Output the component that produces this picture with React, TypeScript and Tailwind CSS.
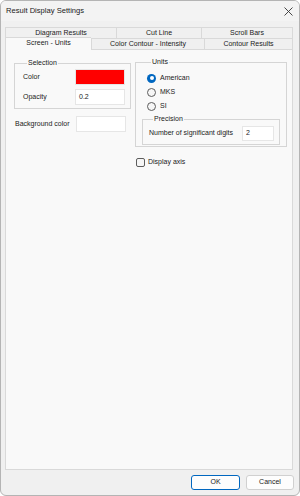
import React from "react";

var rowOne = [
  { label: "Diagram Results", w: "w-[111px]" },
  { label: "Cut Line", w: "w-[85px]" },
  { label: "Scroll Bars", w: "w-[92px]" },
];

var rowTwo = [
  { label: "Screen - Units", w: "w-[86px]", active: true },
  { label: "Color Contour - Intensity", w: "w-[113px]" },
  { label: "Contour Results", w: "w-[89px]" },
];

function Group(props: { title: string; className: string; children: React.ReactNode }) {
  return (
    <fieldset className={"border border-[#d5d5d5] " + props.className}>
      <legend className="ml-[4px] px-[1px] leading-[10px]">{props.title}</legend>
      {props.children}
    </fieldset>
  );
}

function Radio(props: { label: string; checked?: boolean }) {
  return (
    <div className="flex items-center h-[14px]">
      {props.checked ? (
        <span className="w-[9px] h-[9px] rounded-full bg-[#0067c0] flex items-center justify-center">
          <span className="w-[4px] h-[4px] rounded-full bg-white" />
        </span>
      ) : (
        <span className="w-[9px] h-[9px] rounded-full border border-[#5d5d5d] bg-[#f6f6f6]" />
      )}
      <span className="ml-[4px]">{props.label}</span>
    </div>
  );
}

export default function App() {
  return (
    <div
      className="w-[300px] h-[496px] bg-[#f0f0f0] border border-[#b4b4b4] rounded-[6px] overflow-hidden flex flex-col text-[7px] text-[#1a1a1a]"
      style={{ fontFamily: '"Liberation Sans", Arial, sans-serif' }}
    >
      {/* title bar */}
      <div className="h-[20px] shrink-0 flex items-center justify-between pl-[5px] pr-[5px] bg-[#f3f3f3]">
        <span className="text-[7.6px]">Result Display Settings</span>
        <svg width="9" height="9" viewBox="0 0 9 9" className="mr-[1px]">
          <path d="M0.5 0.5 L8.5 8.5 M8.5 0.5 L0.5 8.5" stroke="#333" strokeWidth="0.9" />
        </svg>
      </div>

      {/* tabs */}
      <div className="mt-[6px] ml-[4px] w-[288px] flex flex-col">
        <div className="flex h-[11px]">
          {rowOne.map(function (t, i) {
            return (
              <div
                key={i}
                className={
                  t.w +
                  " border-t border-l border-[#d9d9d9] flex items-center justify-center bg-[#f0f0f0]" +
                  (i === rowOne.length - 1 ? " border-r" : "")
                }
              >
                {t.label}
              </div>
            );
          })}
        </div>
        <div className="flex h-[12px] items-end">
          {rowTwo.map(function (t, i) {
            return (
              <div
                key={i}
                className={
                  t.w +
                  " flex items-center justify-center border-t border-l border-[#d9d9d9]" +
                  (t.active
                    ? " h-[14px] -mb-[1px] bg-[#f9f9f9] relative z-10 pb-[2px]"
                    : " h-[12px] bg-[#f0f0f0] border-b") +
                  (i === rowTwo.length - 1 ? " border-r" : "")
                }
              >
                {t.label}
              </div>
            );
          })}
        </div>

        {/* panel */}
        <div className="h-[420px] bg-[#f9f9f9] border border-t-0 border-[#d9d9d9] flex items-start pl-[8px] pt-[8px]">
          {/* left column */}
          <div className="w-[117px] flex flex-col">
            <Group title="Selection" className="w-[117px] h-[51px] pl-[8px] pr-[5px]">
              <div className="flex items-center justify-between h-[16px] mt-[1px]">
                <span>Color</span>
                <span className="w-[50px] h-[16px] bg-[#ff0000] border border-[#e6e6e6]" />
              </div>
              <div className="flex items-center justify-between h-[16px] mt-[4px]">
                <span>Opacity</span>
                <span className="w-[50px] h-[16px] bg-white border border-[#e6e6e6] flex items-center pl-[3px]">0.2</span>
              </div>
            </Group>
            <div className="flex items-center justify-between h-[16px] mt-[7px] pl-[1px] pr-[5px]">
              <span>Background color</span>
              <span className="w-[50px] h-[16px] bg-white border border-[#e6e6e6]" />
            </div>
          </div>

          {/* right column */}
          <div className="ml-[4px] w-[151px] flex flex-col -mt-[1px]">
            <Group title="Units" className="w-[151px] h-[90px] pl-[11px] pr-[6px]">
              <div className="flex flex-col mt-[4px]">
                <Radio label="American" checked />
                <Radio label="MKS" />
                <Radio label="SI" />
              </div>
              <Group title="Precision" className="w-[138px] h-[31px] -ml-[5px] mt-[1px] pl-[6px] pr-[5px]">
                <div className="flex items-center justify-between h-[16px] mt-[1px]">
                  <span>Number of significant digits</span>
                  <span className="w-[32px] h-[15px] bg-white border border-[#e6e6e6] flex items-center pl-[3px]">2</span>
                </div>
              </Group>
            </Group>
            <div className="flex items-center mt-[10px] ml-[1px]">
              <span className="w-[9px] h-[9px] border border-[#5d5d5d] rounded-[2px] bg-[#f6f6f6]" />
              <span className="ml-[3px]">Display axis</span>
            </div>
          </div>
        </div>
      </div>

      {/* buttons */}
      <div className="flex justify-end gap-[6px] mt-[5px] pr-[5px]">
        <button className="w-[49px] h-[15px] rounded-[3px] bg-[#fdfdfd] border border-[#0067c0] text-[7px]">OK</button>
        <button className="w-[48px] h-[15px] rounded-[3px] bg-[#fdfdfd] border border-[#d0d0d0] text-[7px]">Cancel</button>
      </div>
    </div>
  );
}
